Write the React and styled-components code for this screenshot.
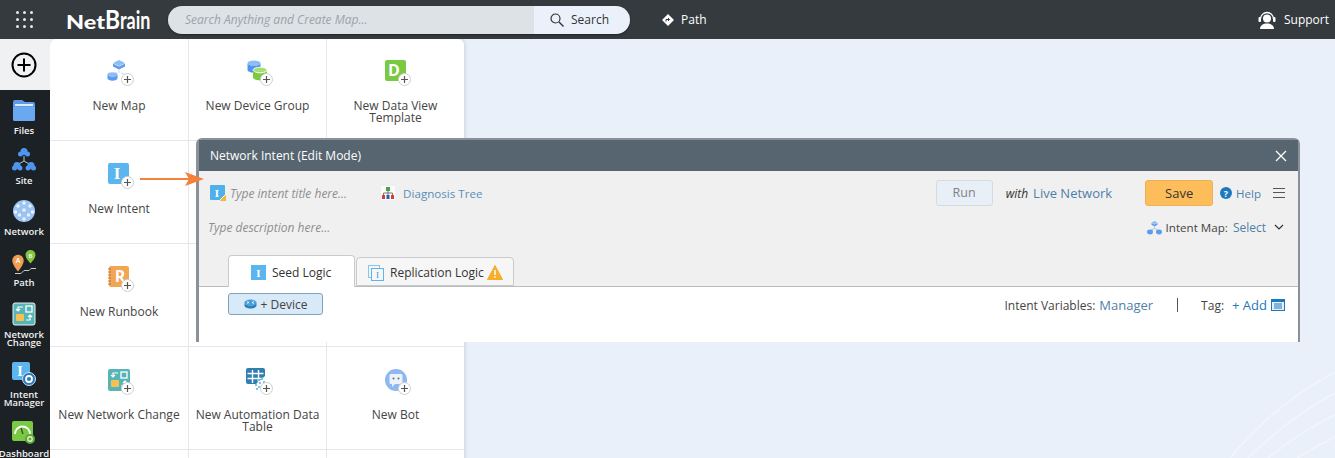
import styled, { createGlobalStyle } from "styled-components";

const GlobalStyle = createGlobalStyle`
    html, body {
        margin: 0;
        padding: 0;
        background: #e9f0fa;
    }
    * {
        box-sizing: border-box;
    }
`;

const Page = styled.div`
    width: 1335px;
    height: 458px;
    overflow: hidden;
    display: flex;
    flex-direction: column;
    font-family: "Open Sans", "Noto Sans", sans-serif;
    color: #333;
`;

const TopBar = styled.header`
    height: 39px;
    flex: none;
    background: #353a3e;
    display: flex;
    align-items: center;
    color: #fff;
    font-size: 12px;
`;

const Apps = styled.div`
    width: 17px;
    height: 17px;
    margin-left: 16px;
    display: grid;
    grid-template-columns: repeat(3, 3px);
    grid-template-rows: repeat(3, 3px);
    justify-content: space-between;
    align-content: space-between;
    i {
        background: #e8e8e8;
        border-radius: 50%;
    }
`;

const Logo = styled.div`
    margin-left: 33px;
    width: 102px;
    height: 39px;
    display: flex;
    align-items: baseline;
    font-family: "Lato", sans-serif;
    line-height: 39px;
    color: #fff;
`;

const LogoPart = styled.span`
    display: inline-block;
    width: ${(props) => props.width};
    font-size: ${(props) => props.size};
    font-weight: ${(props) => props.weight};
    transform: scale(${(props) => props.scaleX || 1}, ${(props) => props.scaleY || 1});
    transform-origin: 0 25px;
    position: relative;
    top: -1px;
`;

const SearchBar = styled.div`
    width: 462px;
    height: 28px;
    display: flex;
    border-radius: 14px;
    overflow: hidden;
    box-shadow: 0 1px 2px rgba(0, 0, 0, 0.4);
`;

const SearchInput = styled.div`
    flex: 1;
    background: #dde2e6;
    color: #9ba3a9;
    font-style: italic;
    font-size: 12px;
    line-height: 28px;
    padding-left: 17px;
`;

const SearchButton = styled.div`
    width: 96px;
    background: #eaf1fb;
    color: #333;
    display: flex;
    align-items: center;
    gap: 7px;
    padding-left: 16px;
`;

const PathLink = styled.div`
    margin-left: 32px;
    display: flex;
    align-items: center;
    gap: 7px;
`;

const Support = styled.div`
    margin-left: auto;
    margin-right: 6px;
    display: flex;
    align-items: center;
    gap: 8px;
`;

const Body = styled.div`
    flex: 1;
    display: flex;
    position: relative;
    min-height: 0;
`;

const Sidebar = styled.nav`
    width: 50px;
    flex: none;
    background: #1c2126;
`;

const AddTab = styled.div`
    height: 51px;
    padding-right: 2px;
    background: #f0f1f2;
    display: flex;
    align-items: center;
    justify-content: center;
`;

const NavItem = styled.div`
    height: ${(props) => props.height || "50px"};
    display: flex;
    flex-direction: column;
    align-items: center;
    color: #f2f2f2;
    font-size: 9.5px;
    font-weight: 600;
    line-height: 8px;
    text-align: center;
    white-space: nowrap;
    svg {
        margin-bottom: 5px;
    }
`;

const NavList = styled.div`
    padding: 8px 2px 0 0;
`;

const Canvas = styled.main`
    flex: 1;
    position: relative;
    background: #e9f0fa;
    overflow: hidden;
`;

const Arcs = styled.svg`
    position: absolute;
    right: 0;
    bottom: 0;
`;

const Panel = styled.div`
    position: relative;
    width: 414px;
    background: #fff;
    border-radius: 6px 6px 0 0;
    box-shadow: 1px 0 4px rgba(0, 0, 0, 0.12);
    display: grid;
    grid-template-columns: 139px 138px 137px;
    grid-template-rows: 102px repeat(4, 103px);
`;

const Cell = styled.div`
    border-right: 1px solid #e4e6e8;
    border-bottom: 1px solid #e4e6e8;
    padding-top: 20px;
    display: flex;
    flex-direction: column;
    align-items: center;
    &:nth-child(n + 4) {
        padding-top: 21px;
    }
    &:nth-child(3n) {
        border-right: none;
    }
`;

const IconBox = styled.div`
    position: relative;
    width: 24px;
    height: 24px;
    margin-bottom: 17px;
`;

const Badge = styled.span`
    position: absolute;
    right: -3px;
    bottom: -3px;
    width: 13px;
    height: 13px;
    border-radius: 50%;
    background: #fff;
    border: 1px solid #cfcfcf;
    color: #555;
    display: flex;
    align-items: center;
    justify-content: center;
`;

const CellLabel = styled.div`
    font-size: 12px;
    line-height: 12px;
    text-align: center;
    color: #444;
    width: 130px;
`;

const Modal = styled.section`
    position: absolute;
    left: 196px;
    top: 99px;
    width: 1104px;
    height: 204px;
    background: #fff;
    border: 3px solid #8a9299;
    border-bottom: none;
    border-radius: 6px 6px 0 0;
    border-top-width: 2px;
    border-right-width: 2px;
`;

const ModalHeader = styled.div`
    height: 31px;
    background: #56656f;
    color: #fff;
    font-size: 12px;
    display: flex;
    align-items: center;
    justify-content: space-between;
    padding: 0 11px;
`;

const Toolbar = styled.div`
    height: 116px;
    background: #f0f0f0;
    border-bottom: 1px solid #b9bcbf;
    position: relative;
    display: flex;
    flex-direction: column;
`;

const Row = styled.div`
    display: flex;
    align-items: center;
    height: ${(props) => props.height || "auto"};
`;

const TitleRow = styled(Row)`
    padding: 3px 13px 0 11px;
`;

const DescRow = styled(Row)`
    padding: 0 14px 0 9px;
`;

const Placeholder = styled.span`
    font-size: 12px;
    font-style: italic;
    color: #8e8e8e;
    margin-left: ${(props) => props.left || "0"};
`;

const TreeLink = styled.div`
    margin-left: 33px;
    display: flex;
    align-items: center;
    gap: 7px;
    font-size: 11.6px;
    color: #5a8fb5;
`;

const RunButton = styled.div`
    margin-left: auto;
    width: 57px;
    height: 26px;
    background: #e9eff6;
    border: 1px solid #d3dbe4;
    border-radius: 3px;
    color: #7c8389;
    font-size: 12.5px;
    line-height: 24px;
    text-align: center;
`;

const WithText = styled.span`
    margin-left: 13px;
    font-size: 12px;
    font-style: italic;
    color: #333;
`;

const BlueLink = styled.span`
    color: ${(props) => props.color || "#4f7fa8"};
    font-size: ${(props) => props.size || "13px"};
    margin-left: ${(props) => props.left || "0"};
`;

const SaveButton = styled.div`
    margin-left: 33px;
    width: 68px;
    height: 26px;
    background: #fdbd5b;
    border: 1px solid #eeb052;
    border-radius: 3px;
    color: #333;
    font-size: 13px;
    line-height: 24px;
    text-align: center;
`;

const HelpLink = styled.div`
    margin-left: 7px;
    display: flex;
    align-items: center;
    gap: 4px;
`;

const Burger = styled.div`
    margin-left: 12px;
    width: 12px;
    height: 10px;
    border-top: 1.5px solid #555;
    border-bottom: 1.5px solid #555;
    position: relative;
    &::after {
        content: "";
        position: absolute;
        left: 0;
        right: 0;
        top: 2.75px;
        height: 1.5px;
        background: #555;
    }
`;

const IntentMap = styled.div`
    margin-left: auto;
    display: flex;
    align-items: center;
    font-size: 11.6px;
    color: #444;
    svg:first-child {
        margin-right: 4px;
    }
    svg:last-child {
        margin-left: 8px;
    }
`;

const Tabs = styled.div`
    position: absolute;
    left: 29px;
    bottom: -1px;
    display: flex;
    align-items: flex-end;
`;

const Tab = styled.div`
    height: ${(props) => (props.active ? "32px" : "29px")};
    width: ${(props) => (props.active ? "127px" : "158px")};
    margin-left: ${(props) => (props.active ? "0" : "1px")};
    margin-bottom: ${(props) => (props.active ? "0" : "1px")};
    padding: 2px 0 0 ${(props) => (props.active ? "22px" : "11px")};
    background: ${(props) => (props.active ? "#fff" : "#f6f6f6")};
    border: 1px solid #c8cacc;
    border-bottom: ${(props) => (props.active ? "none" : "1px solid #c8cacc")};
    border-radius: 4px 4px 0 0;
    display: flex;
    align-items: center;
    gap: 6px;
    font-size: 12px;
    color: #333;
    svg:last-child:not(:first-child) {
        margin-left: -3px;
    }
`;

const ContentRow = styled.div`
    height: 55px;
    padding: 6px 13px 0 29px;
    display: flex;
    align-items: flex-start;
`;

const DeviceButton = styled.div`
    width: 95px;
    height: 22px;
    background: #d8e9f8;
    border: 1px solid #7fa3bf;
    border-radius: 3px;
    display: flex;
    align-items: center;
    justify-content: center;
    gap: 4px;
    font-size: 12px;
    color: #444;
`;

const ContentRight = styled.div`
    margin-left: auto;
    height: 24px;
    display: flex;
    align-items: center;
    font-size: 12px;
    color: #444;
`;

const Divider = styled.div`
    width: 1px;
    height: 14px;
    background: #555;
    margin: 0 23px 0 24px;
`;

const AddIconWrap = styled.span`
    display: inline-flex;
    margin-left: 4px;
`;

const Arrow = styled.svg`
    position: absolute;
    left: 139px;
    top: 133px;
`;

const PlusGlyph = () => (
    <svg width="9" height="9" viewBox="0 0 9 9">
        <path d="M4.5 1v7M1 4.5h7" stroke="#555" strokeWidth="1.2" />
    </svg>
);

const MapGlyph = () => (
    <svg width="24" height="24" viewBox="0 0 24 24">
        <path d="M12 1l6 3-6 3-6-3z" fill="#8dbdf5" />
        <path d="M6 4.5l6 3 6-3v3l-6 3-6-3z" fill="#5b9cf0" />
        <path d="M12 10v4M10 14l-3 1M14 14l3 1" stroke="#c6d8ee" strokeWidth="1" />
        <ellipse cx="5.5" cy="15.5" rx="5" ry="2.2" fill="#8dbdf5" />
        <path d="M.5 15.5v4c0 1.2 2.2 2.2 5 2.2s5-1 5-2.2v-4c0 1.2-2.2 2.2-5 2.2s-5-1-5-2.2z" fill="#5b9cf0" />
    </svg>
);

const GroupGlyph = () => (
    <svg width="24" height="24" viewBox="0 0 24 24">
        <ellipse cx="8" cy="4" rx="6.5" ry="2.6" fill="#8dbdf5" />
        <path d="M1.5 4v7c0 1.4 2.9 2.6 6.5 2.6s6.500-1.200 6.500-2.600V4c0 1.400-2.900 2.600-6.500 2.600S1.500 5.400 1.500 4z" fill="#4f94ee" />
        <ellipse cx="14" cy="11" rx="7" ry="2.8" fill="#a9dd72" stroke="#fff" strokeWidth="0.8" />
        <path d="M7 11.5v7c0 1.4 3.1 2.8 7 2.8s7-1.4 7-2.8v-7c0 1.4-3.1 2.8-7 2.8s-7-1.4-7-2.8z" fill="#7ccb3f" />
    </svg>
);

const SquareLetter = ({ fill, letter, color = "#fff", serif, size = 15 }) => (
    <svg width="24" height="24" viewBox="0 0 24 24">
        <rect x="1" y="1" width="21" height="21" rx="2" fill={fill} />
        <text
            x="10"
            y="17"
            textAnchor="middle"
            fontSize={size}
            fontWeight="700"
            fontFamily={serif ? "Liberation Serif" : "Open Sans"}
            fill={color}
        >
            {letter}
        </text>
    </svg>
);

const RunbookGlyph = () => (
    <svg width="24" height="24" viewBox="0 0 24 24">
        <rect x="2" y="1" width="20" height="21" rx="2" fill="#f2a553" />
        <path d="M1 4h3M1 7h3M1 10h3M1 13h3M1 16h3M1 19h3" stroke="#b9752b" strokeWidth="1" />
        <text x="13" y="17" textAnchor="middle" fontSize="16" fontWeight="700" fontFamily="Open Sans" fill="#fff">
            R
        </text>
    </svg>
);

const ChangeGlyph = ({ rim }) => (
    <svg width="24" height="24" viewBox="0 0 24 24">
        <rect x="1" y="1" width="22" height="22" rx="2" fill="#57b5b8" stroke={rim ? "#e8f3f3" : "none"} strokeWidth="1" />
        <rect x="4" y="12" width="8" height="7" rx="1" fill="#f6c14f" />
        <rect x="14" y="4" width="6" height="6" fill="none" stroke="#fff" strokeWidth="1.3" />
        <path d="M11 5H6v4M4 7l2 2 2-2M14 18h4v-5M16 15l2-2 2 2" fill="none" stroke="#fff" strokeWidth="1.2" />
    </svg>
);

const TableGlyph = () => (
    <svg width="24" height="24" viewBox="0 0 24 24">
        <rect x="0" y="0" width="19" height="16" rx="2" fill="#2f7fb0" />
        <path d="M1.5 5.500h16M1.500 10.500h16M6.500 2v13M12.500 2v13" stroke="#fff" strokeWidth="1.400" />
        <path d="M19 8v8h-9z" fill="#fff" />
        <g fill="#7fc5ea">
            <rect x="11" y="11" width="2" height="2" />
            <rect x="15" y="10" width="2" height="2" />
            <rect x="13" y="14" width="2" height="2" />
            <rect x="17" y="13" width="2" height="2" />
            <rect x="9" y="16" width="2" height="2" />
            <rect x="12" y="18" width="2" height="2" />
            <rect x="10" y="20" width="2" height="2" />
        </g>
    </svg>
);

const BotGlyph = () => (
    <svg width="24" height="24" viewBox="0 0 24 24">
        <circle cx="12" cy="12" r="11" fill="#8db8f2" />
        <path d="M7 6h10a1.5 1.5 0 0 1 1.500 1.500v7a1.500 1.500 0 0 1-1.500 1.500h-6l-3 3v-3H7a1.500 1.500 0 0 1-1.500-1.500v-7A1.500 1.500 0 0 1 7 6z" fill="#eef3fa" />
        <circle cx="9.500" cy="10.500" r="1" fill="#667" />
        <circle cx="14.500" cy="10.500" r="1" fill="#667" />
    </svg>
);

const FolderIcon = () => (
    <svg width="24" height="24" viewBox="0 0 24 24">
        <path d="M1 4a2 2 0 0 1 2-2h7l3 2h8a2 2 0 0 1 2 2v15a2 2 0 0 1-2 2H3a2 2 0 0 1-2-2z" fill="#5d9be8" />
        <path d="M3 6h18v2H3z" fill="#dfeaf7" />
        <path d="M1 9h22v12a2 2 0 0 1-2 2H3a2 2 0 0 1-2-2z" fill="#6aa8f0" />
    </svg>
);

const SiteIcon = () => (
    <svg width="24" height="24" viewBox="0 0 24 24">
        <path d="M12 8v5M12 13l-7 4M12 13l7 4" stroke="#b8c4d2" strokeWidth="1" />
        <g fill="#4f94ee">
            <circle cx="12" cy="3.500" r="3.500" />
            <circle cx="8.500" cy="6" r="2.500" />
            <circle cx="15.500" cy="6" r="2.500" />
            <circle cx="5" cy="17.500" r="3.500" />
            <circle cx="2.500" cy="20" r="2.500" />
            <circle cx="8" cy="20" r="2.500" />
            <circle cx="19" cy="17.500" r="3.500" />
            <circle cx="16" cy="20" r="2.500" />
            <circle cx="21.500" cy="20" r="2.500" />
        </g>
    </svg>
);

const NetworkIcon = () => (
    <svg width="24" height="24" viewBox="0 0 24 24">
        <circle cx="12" cy="12" r="11" fill="#9cc4f2" />
        <g fill="#eaf3fd">
            <circle cx="12" cy="4" r="1.700" />
            <circle cx="6" cy="7" r="1.700" />
            <circle cx="18" cy="7" r="1.700" />
            <circle cx="3.500" cy="13" r="1.700" />
            <circle cx="12" cy="11" r="1.700" />
            <circle cx="20.500" cy="13" r="1.700" />
            <circle cx="7.500" cy="16" r="1.700" />
            <circle cx="16.500" cy="16" r="1.700" />
            <circle cx="12" cy="20" r="1.700" />
        </g>
    </svg>
);

const PathIcon = () => (
    <svg width="24" height="24" viewBox="0 0 24 24">
        <path d="M6 4.800a5.700 5.700 0 0 1 5.700 5.700c0 3.500-3 7.500-5.700 11-2.700-3.500-5.700-7.500-5.700-11A5.700 5.700 0 0 1 6 4.800z" fill="#ee9f55" />
        <text x="6" y="13" textAnchor="middle" fontSize="7" fontFamily="Open Sans" fill="#fff">A</text>
        <path d="M18.500 0a5 5 0 0 1 5 5c0 2.800-2.500 5.500-5 8.500-2.500-3-5-5.700-5-8.500a5 5 0 0 1 5-5z" fill="#84c441" />
        <text x="18.500" y="7.500" textAnchor="middle" fontSize="6" fontFamily="Open Sans" fill="#fff">B</text>
        <path d="M3 23.500h6l3-3h5l2-2h5" fill="none" stroke="#ccc" strokeWidth="1" />
    </svg>
);

const IntentMgrIcon = () => (
    <svg width="24" height="24" viewBox="0 0 24 24">
        <rect x="0" y="0" width="18" height="18" rx="2" fill="#5bb5ef" />
        <text x="8" y="14" textAnchor="middle" fontSize="14" fontWeight="700" fontFamily="Liberation Serif" fill="#fff">I</text>
        <circle cx="17" cy="17" r="6.500" fill="#2a79b8" stroke="#cfe2f3" strokeWidth="1" />
        <circle cx="17" cy="17" r="3" fill="none" stroke="#fff" strokeWidth="1.800" />
    </svg>
);

const DashboardIcon = () => (
    <svg width="24" height="24" viewBox="0 0 24 24">
        <rect x="0" y="0" width="21" height="20" rx="2" fill="#7ac943" />
        <path d="M3 13a7.500 7.500 0 0 1 15 0" fill="none" stroke="#fff" strokeWidth="1.800" />
        <path d="M9 7l2 6" stroke="#3e3e3e" strokeWidth="1.200" />
        <circle cx="18" cy="18" r="5" fill="#5ea932" />
        <circle cx="18" cy="18" r="2.200" fill="none" stroke="#dff0cd" strokeWidth="1.400" />
    </svg>
);

const TinyIntent = () => (
    <svg width="16" height="16" viewBox="0 0 16 16">
        <rect x="0" y="0" width="15" height="15" rx="1" fill="#4fb0ea" />
        <text x="7" y="12" textAnchor="middle" fontSize="11" fontWeight="700" fontFamily="Liberation Serif" fill="#fff">I</text>
        <path d="M16 9v7h-7z" fill="#f5b93a" />
        <path d="M9 16l7-7" stroke="#fff" strokeWidth="1" />
    </svg>
);

const TreeIcon = () => (
    <svg width="16" height="16" viewBox="0 0 16 16">
        <rect x="0" y="0" width="16" height="16" rx="1" fill="#fbfbfb" stroke="#e2e2e2" />
        <rect x="6" y="2" width="4" height="4" fill="#49a24a" />
        <path d="M8 6v2M3.500 10V8h9v2M8 8v2" fill="none" stroke="#777" strokeWidth="1" />
        <rect x="2" y="10" width="3" height="4" fill="#d63c3c" />
        <rect x="6.500" y="10" width="3" height="4" fill="#2f5fa8" />
        <rect x="11" y="10" width="3" height="4" fill="#d63c3c" />
    </svg>
);

const HelpIcon = () => (
    <svg width="12" height="12" viewBox="0 0 12 12">
        <circle cx="6" cy="6" r="6" fill="#1e78bd" />
        <text x="6" y="9.500" textAnchor="middle" fontSize="9" fontWeight="700" fontFamily="Open Sans" fill="#fff">?</text>
    </svg>
);

const SmallMapIcon = () => (
    <svg width="15" height="15" viewBox="0 0 15 15">
        <path d="M7.500 1l3 1.600-3 1.600-3-1.600z" fill="#8dbdf5" />
        <path d="M4.500 3l3 1.600 3-1.600v1.800l-3 1.600-3-1.600z" fill="#5b9cf0" />
        <path d="M7.500 7v2M4 10l3.500-1.500L11 10" fill="none" stroke="#aac4e0" strokeWidth="0.800" />
        <ellipse cx="3" cy="12" rx="3" ry="2.400" fill="#5b9cf0" />
        <ellipse cx="12" cy="12" rx="3" ry="2.400" fill="#5b9cf0" />
    </svg>
);

const Chevron = () => (
    <svg width="10" height="6" viewBox="0 0 10 6">
        <path d="M1 1l4 4 4-4" fill="none" stroke="#333" strokeWidth="1.200" />
    </svg>
);

const SeedIcon = () => (
    <svg width="15" height="15" viewBox="0 0 15 15">
        <rect width="15" height="15" fill="#5bb5ef" />
        <text x="7.500" y="12" textAnchor="middle" fontSize="11" fontWeight="700" fontFamily="Liberation Serif" fill="#fff">I</text>
    </svg>
);

const ReplicationIcon = () => (
    <svg width="16" height="16" viewBox="0 0 16 16">
        <rect x="0.500" y="0.500" width="11" height="12" fill="none" stroke="#8cc4ec" />
        <rect x="3.500" y="3.500" width="12" height="12" fill="#f6f6f6" stroke="#5bb5ef" />
        <text x="9.500" y="13" textAnchor="middle" fontSize="9" fontFamily="Liberation Serif" fill="#3f9bd9">I</text>
    </svg>
);

const WarnIcon = () => (
    <svg width="16" height="15" viewBox="0 0 16 15">
        <path d="M8 .5l7.500 14H.500z" fill="#f6ad2b" stroke="#f6ad2b" strokeLinejoin="round" />
        <path d="M8 5v5M8 11.200v1.600" stroke="#fff" strokeWidth="1.500" />
    </svg>
);

const RouterIcon = () => (
    <svg width="13" height="10" viewBox="0 0 13 10">
        <ellipse cx="6.500" cy="3.500" rx="6" ry="3" fill="#45a0dc" />
        <path d="M.5 3.500v3c0 1.600 2.700 3 6 3s6-1.400 6-3v-3c0 1.600-2.700 3-6 3s-6-1.400-6-3z" fill="#2c7fb8" />
        <path d="M3 2.500l2 1M10 2.500l-2 1M3 4.500l2-1M10 4.500l-2-1" stroke="#fff" strokeWidth="0.800" />
    </svg>
);

const ListIcon = () => (
    <svg width="14" height="12" viewBox="0 0 14 12">
        <rect x="0.500" y="0.500" width="13" height="11" fill="#e3effa" stroke="#1e78bd" />
        <rect x="0.500" y="0.500" width="13" height="2.500" fill="#1e78bd" />
        <path d="M3 5h8M3 7h8M3 9h8" stroke="#1e78bd" strokeWidth="1" />
    </svg>
);

const menus = [
    { text: "New Map", glyph: <MapGlyph /> },
    { text: "New Device Group", glyph: <GroupGlyph /> },
    { text: "New Data View Template", glyph: <SquareLetter fill="#7ac943" letter="D" size={16} /> },
    { text: "New Intent", glyph: <SquareLetter fill="#5bb5ef" letter="I" serif size={17} /> },
    {},
    {},
    { text: "New Runbook", glyph: <RunbookGlyph /> },
    {},
    {},
    { text: "New Network Change", glyph: <ChangeGlyph /> },
    { text: "New Automation Data Table", glyph: <TableGlyph /> },
    { text: "New Bot", glyph: <BotGlyph /> },
    {},
    {},
    {},
];

const navItems = [
    { text: ["Files"], icon: <FolderIcon />, height: "50px" },
    { text: ["Site"], icon: <SiteIcon />, height: "51px" },
    { text: ["Network"], icon: <NetworkIcon />, height: "51px" },
    { text: ["Path"], icon: <PathIcon />, height: "52px" },
    { text: ["Network", "Change"], icon: <ChangeGlyph rim />, height: "60px" },
    { text: ["Intent", "Manager"], icon: <IntentMgrIcon />, height: "59px" },
    { text: ["Dashboard"], icon: <DashboardIcon />, height: "50px" },
];

function App() {
    return (
        <Page>
            <GlobalStyle />
            <TopBar>
                <Apps>
                    {Array.from({ length: 9 }).map((_, idx) => (
                        <i key={idx} />
                    ))}
                </Apps>
                <Logo>
                    <LogoPart width="39px" size="18px" weight="900" scaleX="1.3" scaleY="1.1">Net</LogoPart>
                    <LogoPart width="15px" size="27px" weight="700" scaleX="0.85">B</LogoPart>
                    <LogoPart width="32px" size="18px" weight="700" scaleY="1.4">rain</LogoPart>
                </Logo>
                <SearchBar>
                    <SearchInput>Search Anything and Create Map...</SearchInput>
                    <SearchButton>
                        <svg width="14" height="14" viewBox="0 0 14 14">
                            <circle cx="5.500" cy="5.500" r="4.500" fill="none" stroke="#333" strokeWidth="1.200" />
                            <path d="M9 9l4.500 4.500" stroke="#333" strokeWidth="1.400" />
                        </svg>
                        Search
                    </SearchButton>
                </SearchBar>
                <PathLink>
                    <svg width="12" height="12" viewBox="0 0 12 12">
                        <path d="M6 0l6 6-6 6-6-6z" fill="#fff" />
                        <path d="M4 7.500V5.500h3M6 4l1.500 1.500L6 7" fill="none" stroke="#353a3e" strokeWidth="1" />
                    </svg>
                    Path
                </PathLink>
                <Support>
                    <svg width="18" height="18" viewBox="0 0 18 18">
                        <path d="M2.500 8a6.500 6.500 0 0 1 13 0" fill="none" stroke="#fff" strokeWidth="1.300" />
                        <rect x="0.500" y="6" width="2.500" height="5" rx="1" fill="#fff" />
                        <rect x="15" y="6" width="2.500" height="5" rx="1" fill="#fff" />
                        <circle cx="9" cy="7.500" r="4" fill="#fff" />
                        <path d="M2 18c0-3.500 3-5.500 7-5.500s7 2 7 5.500z" fill="#fff" />
                    </svg>
                    Support
                </Support>
            </TopBar>
            <Body>
                <Sidebar>
                    <AddTab>
                        <svg width="26" height="26" viewBox="0 0 26 26">
                            <circle cx="13" cy="13" r="11.500" fill="none" stroke="#000" strokeWidth="2" />
                            <path d="M13 6.500v13M6.500 13h13" stroke="#000" strokeWidth="2" />
                        </svg>
                    </AddTab>
                    <NavList>
                        {navItems.map((item) => (
                            <NavItem key={item.text.join(" ")} height={item.height}>
                                {item.icon}
                                {item.text.map((line) => (
                                    <div key={line}>{line}</div>
                                ))}
                            </NavItem>
                        ))}
                    </NavList>
                </Sidebar>
                <Canvas>
                    <Arcs width="105" height="86" viewBox="0 0 105 86">
                        <g fill="none" stroke="#f2f6fc" strokeWidth="1.500">
                            <path d="M0 86C30 50 60 25 105 0" />
                            <path d="M18 86Q60 45 105 21" />
                            <path d="M38 86Q70 60 105 43" />
                            <path d="M67 86Q85 75 105 65" />
                        </g>
                    </Arcs>
                    <Panel>
                        {menus.map((menu, idx) => (
                            <Cell key={idx}>
                                {menu.text && (
                                    <>
                                        <IconBox>
                                            {menu.glyph}
                                            <Badge>
                                                <PlusGlyph />
                                            </Badge>
                                        </IconBox>
                                        <CellLabel>{menu.text}</CellLabel>
                                    </>
                                )}
                            </Cell>
                        ))}
                    </Panel>
                </Canvas>
                <Modal>
                    <ModalHeader>
                        Network Intent (Edit Mode)
                        <svg width="12" height="12" viewBox="0 0 12 12">
                            <path d="M1 1l10 10M11 1L1 11" stroke="#fff" strokeWidth="1.300" />
                        </svg>
                    </ModalHeader>
                    <Toolbar>
                        <TitleRow height="41px">
                            <TinyIntent />
                            <Placeholder left="4px">Type intent title here...</Placeholder>
                            <TreeLink>
                                <TreeIcon />
                                Diagnosis Tree
                            </TreeLink>
                            <RunButton>Run</RunButton>
                            <WithText>with</WithText>
                            <BlueLink left="5px">Live Network</BlueLink>
                            <SaveButton>Save</SaveButton>
                            <HelpLink>
                                <HelpIcon />
                                <BlueLink size="11.5px">Help</BlueLink>
                            </HelpLink>
                            <Burger />
                        </TitleRow>
                        <DescRow height="30px">
                            <Placeholder>Type description here...</Placeholder>
                            <IntentMap>
                                <SmallMapIcon />
                                Intent Map:
                                <BlueLink size="12px" left="5px">Select</BlueLink>
                                <Chevron />
                            </IntentMap>
                        </DescRow>
                        <Tabs>
                            <Tab active>
                                <SeedIcon />
                                Seed Logic
                            </Tab>
                            <Tab>
                                <ReplicationIcon />
                                Replication Logic
                                <WarnIcon />
                            </Tab>
                        </Tabs>
                    </Toolbar>
                    <ContentRow>
                        <DeviceButton>
                            <RouterIcon />
                            + Device
                        </DeviceButton>
                        <ContentRight>
                            Intent Variables:
                            <BlueLink left="4px">Manager</BlueLink>
                            <Divider />
                            Tag:
                            <BlueLink color="#1e78bd" left="8px">+ Add</BlueLink>
                            <AddIconWrap>
                                <ListIcon />
                            </AddIconWrap>
                        </ContentRight>
                    </ContentRow>
                </Modal>
                <Arrow width="66" height="14" viewBox="0 0 66 14">
                    <path d="M1 7h50" stroke="#f5813a" strokeWidth="2" />
                    <path d="M46 0l19 7-19 7 4-7z" fill="#f5813a" />
                </Arrow>
            </Body>
        </Page>
    );
}

export default App;
